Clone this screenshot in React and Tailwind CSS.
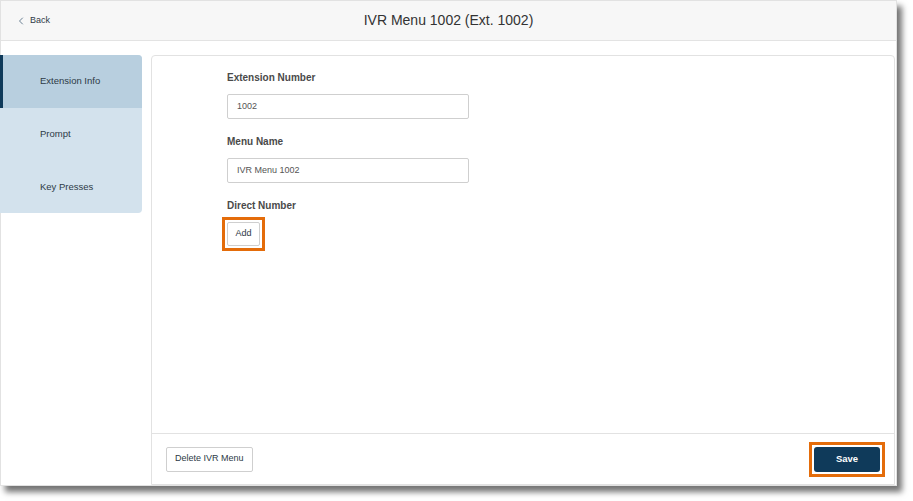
import { ChevronLeft } from "lucide-react";

const tabs = [
  { label: "Extension Info", active: true },
  { label: "Prompt" },
  { label: "Key Presses" },
];

function Field({ label, value }) {
  return (
    <div className="mb-[17px]">
      <div className="text-[10px] font-bold text-[#4a4a4a] mb-[10px] leading-[12px]">{label}</div>
      <div className="w-[242px] h-[25px] border border-[#cfcfcf] rounded-[2px] bg-white flex items-center px-[9px] text-[9px] text-[#555]">
        {value}
      </div>
    </div>
  );
}

export default function App() {
  return (
    <div className="w-[913px] h-[501px] bg-white overflow-hidden" style={{ fontFamily: '"Liberation Sans", Arial, sans-serif' }}>
      <div className="w-[897px] h-[486px] bg-white border border-[#e2e2e2] flex flex-col shadow-[5px_6px_6px_rgba(0,0,0,0.55)]">
        {/* Header */}
        <header className="relative h-[40px] shrink-0 bg-[#f7f7f7] border-b border-[#e3e3e3] flex items-center justify-center">
          <button className="absolute left-[14px] top-0 h-full flex items-center gap-[3px] text-[9px] text-[#2f3b48]">
            <ChevronLeft className="w-[12px] h-[12px] text-[#3a5770]" strokeWidth={1.5} /> Back
          </button>
          <h1 className="text-[14px] text-[#333]">IVR Menu 1002 (Ext. 1002)</h1>
        </header>

        {/* Body */}
        <div className="flex-1 flex gap-[9px] pt-[14px] min-h-0">
          <nav className="w-[142px] h-[158px] shrink-0 -ml-px bg-[#d3e2ed] rounded-r-[4px] overflow-hidden flex flex-col">
            {tabs.map((t) => (
              <div
                key={t.label}
                className={
                  t.active
                    ? "h-[53px] flex items-center pl-[37px] text-[9.5px] text-[#2d3a46] bg-[#b8cfdf] border-l-[3px] border-[#0f3a5a]"
                    : "h-[53px] flex items-center pl-[40px] text-[9.5px] text-[#2d3a46]"
                }
              >
                {t.label}
              </div>
            ))}
          </nav>

          <main className="flex-1 mr-[1px] bg-white border border-[#e2e2e2] rounded-t-[4px] flex flex-col">
            <div className="flex-1 pl-[75px] pt-[16px]">
              <Field label="Extension Number" value="1002" />
              <Field label="Menu Name" value="IVR Menu 1002" />
              <div className="text-[10px] font-bold text-[#4a4a4a] mb-[5px] leading-[12px]">Direct Number</div>
              <div className="inline-flex -ml-[5px] p-[2px] border-[3px] border-[#e46c0a]">
                <button className="w-[33px] h-[24px] border border-[#cfcfcf] rounded-[2px] bg-white text-[9px] text-[#2d3a46]">
                  Add
                </button>
              </div>
            </div>
            <footer className="h-[51px] shrink-0 border-t border-[#e2e2e2] flex items-center justify-between pl-[14px] pr-[9px]">
              <button className="h-[25px] px-[8px] border border-[#cfcfcf] rounded-[2px] bg-white text-[9px] text-[#2d3a46]">
                Delete IVR Menu
              </button>
              <div className="inline-flex p-[2px] border-[3px] border-[#e46c0a]">
                <button className="w-[66px] h-[25px] rounded-[3px] bg-[#0f3a5a] text-white text-[9.5px] font-bold">
                  Save
                </button>
              </div>
            </footer>
          </main>
        </div>
      </div>
    </div>
  );
}
